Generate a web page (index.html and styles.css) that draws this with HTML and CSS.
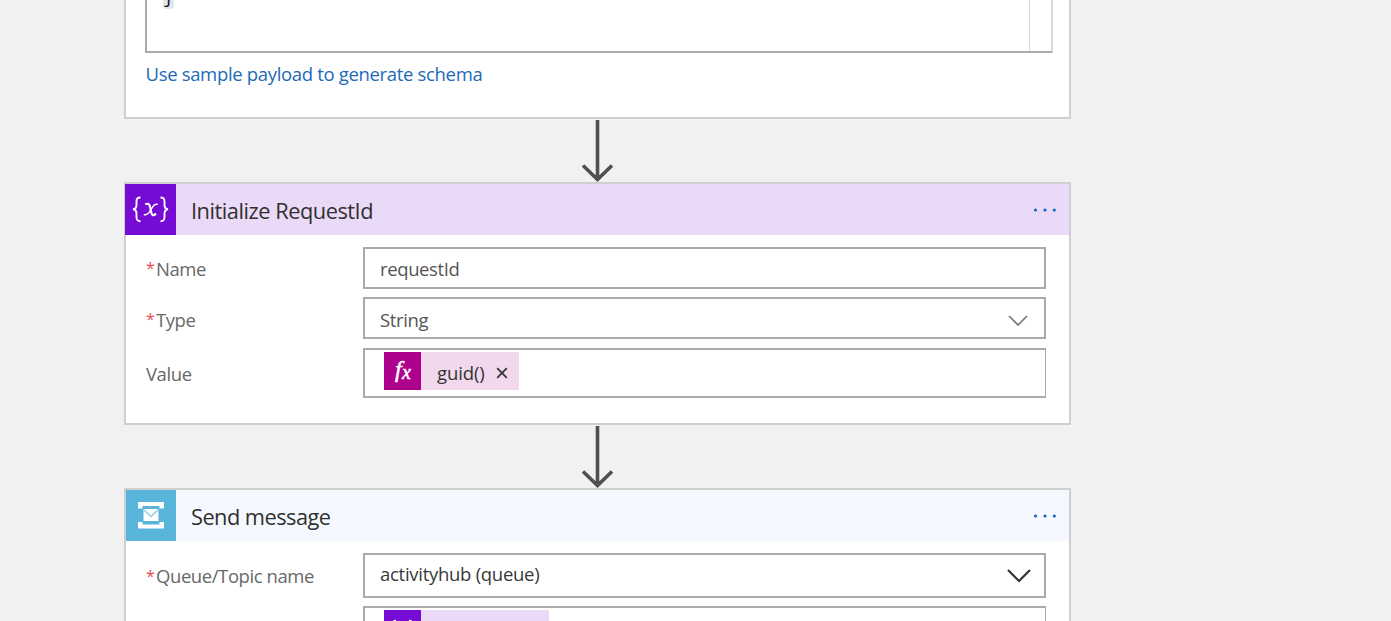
FILE: index.html
```html
<!DOCTYPE html>
<html lang="en">
<head>
<meta charset="utf-8">
<title>Workflow designer</title>
<link rel="stylesheet" href="styles.css">
</head>
<body>
<main class="flow">
  <section class="card card-schema">
    <div class="editor"><div class="code"><span class="brace">}</span></div><div class="ruler"></div></div>
    <a class="link">Use sample payload to generate schema</a>
  </section>
  <svg class="arrow" viewBox="0 0 36 63"><path d="M17.500 1V60M3 46.500L17.500 60.500L32 46.500"/></svg>
  <section class="card card-variable">
    <header class="head head-purple">
      <svg class="icon" viewBox="0 0 51 51"><rect width="51" height="51" fill="#770bd6"/>
        <g fill="none" stroke="#fff" stroke-width="1.900"><path d="M15.500 13.500c-3.500 0-4 1.500-4 4v3.500c0 3-1 4-3.500 4.300 2.500.3 3.500 1.300 3.500 4.300V33c0 2.800.5 4.200 4 4.200M35.500 13.500c3.500 0 4 1.500 4 4v3.500c0 3 1 4 3.500 4.300-2.500.3-3.500 1.300-3.500 4.300V33c0 2.800-.5 4.200-4 4.200"/><path d="M20.300 20.300c3.500-1.500 4.300.2 5 3.500l.9 4.500c.8 3.500 2 3.800 4.800 1.300" stroke-width="2.200"/><path d="M32.800 20.500c-2.500-1-4.500.8-6.500 4.500s-4.300 7-7.500 5.300" stroke-width="1.500"/></g>
      </svg>
      <h2 class="title">Initialize RequestId</h2>
      <svg class="more" viewBox="0 0 24 6"><circle cx="2.500" cy="3" r="1.600"/><circle cx="12" cy="3" r="1.600"/><circle cx="21.300" cy="3" r="1.600"/></svg>
    </header>
    <div class="fields">
      <div class="row"><label><i>*</i><span>Name</span></label><div class="box"><span>requestId</span></div></div>
      <div class="row row-type"><label><i>*</i><span>Type</span></label><div class="box"><span>String</span><svg class="chevron" viewBox="0 0 22 14"><path d="M2 2L11 11L20 2"/></svg></div></div>
      <div class="row row-value"><label><span>Value</span></label><div class="box box-tokens">
        <div class="token"><svg class="token-icon" viewBox="0 0 37 38"><rect width="37" height="38" fill="#ad008c"/><text x="11" y="25" class="fx-f">f</text><text x="18" y="27" class="fx-x">x</text></svg><span>guid()</span><svg class="close" viewBox="0 0 12 12"><path d="M1.200 1.200L10.800 10.800M10.800 1.200L1.200 10.800"/></svg></div>
      </div></div>
    </div>
  </section>
  <svg class="arrow" viewBox="0 0 36 63"><path d="M17.500 1V60M3 46.500L17.500 60.500L32 46.500"/></svg>
  <section class="card card-message">
    <header class="head head-blue">
      <svg class="icon" viewBox="0 0 51 51"><rect width="51" height="51" fill="#59b4d9"/><path fill="#fff" d="M13 12H39V18.500H34.500V16H17.500V18.500H13zM13 38.500H39V32H34.500V34.500H17.500V32H13z"/><rect x="18.500" y="19" width="15" height="12" fill="#fff"/><path d="M18.500 19.500L26 26.500L33.500 19.500" fill="none" stroke="#8dcbe5" stroke-width="1.300"/></svg>
      <h2 class="title title-send">Send message</h2>
      <svg class="more" viewBox="0 0 24 6"><circle cx="2.500" cy="3" r="1.600"/><circle cx="12" cy="3" r="1.600"/><circle cx="21.300" cy="3" r="1.600"/></svg>
    </header>
    <div class="fields">
      <div class="row row-queue"><label><i>*</i><span>Queue/Topic name</span></label><div class="box"><span>activityhub (queue)</span><svg class="chevron chevron-dark" viewBox="0 0 26 16"><path d="M2 2L13 13L24 2"/></svg></div></div>
      <div class="row row-value"><label></label><div class="box box-tokens">
        <div class="token token-variable"><svg class="token-icon" viewBox="0 0 37 38"><rect width="37" height="38" fill="#770bd6"/><path d="M12 10.500c-3 0-3.200 1-3.200 3v3c0 2-1 2.500-2.500 2.500 1.500 0 2.500.6 2.500 2.600v3c0 2 .2 3 3.200 3M25 10.500c3 0 3.200 1 3.200 3v3c0 2 1 2.500 2.500 2.500-1.500 0-2.500.6-2.500 2.600v3c0 2-.2 3-3.200 3" fill="none" stroke="#fff" stroke-width="1.500"/></svg></div>
      </div></div>
    </div>
  </section>
</main>
</body>
</html>
```
FILE: styles.css
```css
* { box-sizing: border-box; }
body { margin: 0; height: 621px; overflow: hidden; background: #f1f1f1; font-family: "Open Sans", "Noto Sans", sans-serif; font-size: 18.5px; letter-spacing: -0.33px; color: #555; }
svg { display: block; flex: none; }
span, h2 { white-space: nowrap; }
.flow { width: 947px; height: 621px; overflow: hidden; margin-left: 124px; display: flex; flex-direction: column; }
.card { border: 2px solid #cfcfcf; background: #fff; flex: none; }
.card-schema { height: 119px; border-top: 0; padding: 0 17px 0 19px; }
.editor { height: 53px; width: 908px; border: 2px solid #aaa; border-top: 0; border-right-color: #d8d8d8; background: #fffffd; display: flex; justify-content: space-between; }
.code { padding-left: 16px; }
.brace { display: flex; align-items: flex-end; width: 11px; height: 9px; overflow: hidden; border-radius: 0 0 3px 3px; background: #e2e6ec; color: #111; font: 18px/20px "Liberation Mono", monospace; padding-bottom: 1px; }
.ruler { width: 22px; border-left: 1px solid #d8d8d8; background: #fff; }
.link { display: block; height: 42px; line-height: 42px; padding-left: 0.5px; color: #1c6ab8; }
.arrow { width: 36px; height: 63px; align-self: center; fill: none; stroke: #505050; stroke-width: 3.6; }
.card-variable { height: 243px; }
.card-message { height: 133px; border-bottom: 0; overflow: hidden; }
.head { height: 51px; margin-left: -1px; display: flex; align-items: center; padding-right: 12px; }
.head-purple { background: #ebdaf7; }
.head-blue { background: #f5f9ff; }
.icon { width: 51px; height: 51px; }
.title { margin: 0 auto 0 15px; font-size: 21.8px; letter-spacing: -0.48px; font-weight: 400; line-height: 49px; color: #303030; padding-top: 2px; }
.title-send { letter-spacing: -0.54px; }
.more { width: 24px; height: 6px; fill: #1469bd; }
.fields { padding: 12px 23px 0 20px; display: flex; flex-direction: column; gap: 8px; }
.row { display: grid; grid-template-columns: 217px 683px; height: 42px; }
.row label { display: flex; align-items: center; color: #686868; letter-spacing: -0.42px; }
.row i { font-style: normal; font-size: 16px; color: #e94b57; width: 10px; flex: none; }
.box { border: 2px solid #aaa; background: #fff; display: flex; align-items: center; justify-content: space-between; padding: 0 15px; }
.box span { letter-spacing: -0.38px; }
.row-type { margin-bottom: 1px; }
.row-type label, .row-type .box { padding-top: 2px; }
.row-type .chevron { margin-top: 4px; }
.row-value { height: 50px; }
.box-tokens { border-right-width: 1px; align-items: flex-start; justify-content: flex-start; padding: 2px 19px; }
.row-queue { height: 45px; }
.row-queue .box { color: #383838; padding: 0 12px 0 15px; }
.row-queue .box span { padding-bottom: 5px; letter-spacing: -0.28px; }
.chevron { width: 22px; height: 14px; fill: none; stroke: #777; stroke-width: 1.6; }
.chevron-dark { width: 26px; height: 16px; stroke: #333; stroke-width: 2.2; }
.token { height: 38px; width: 135px; background: #f1d8ed; color: #333; display: flex; align-items: center; }
.token span { margin-left: 16px; padding-top: 2px; letter-spacing: -0.1px; }
.token-variable { width: 165px; background: #ebdaf7; }
.token-icon { width: 37px; height: 38px; }
.fx-f, .fx-x { font-family: "Liberation Serif", serif; font-style: italic; fill: #fff; stroke: #fff; stroke-width: 0.5px; }
.fx-f { font-size: 24px; }
.fx-x { font-size: 20px; }
.close { width: 12px; height: 12px; margin: 4px 0 0 11.5px; fill: none; stroke: #333; stroke-width: 1.7; }
```
